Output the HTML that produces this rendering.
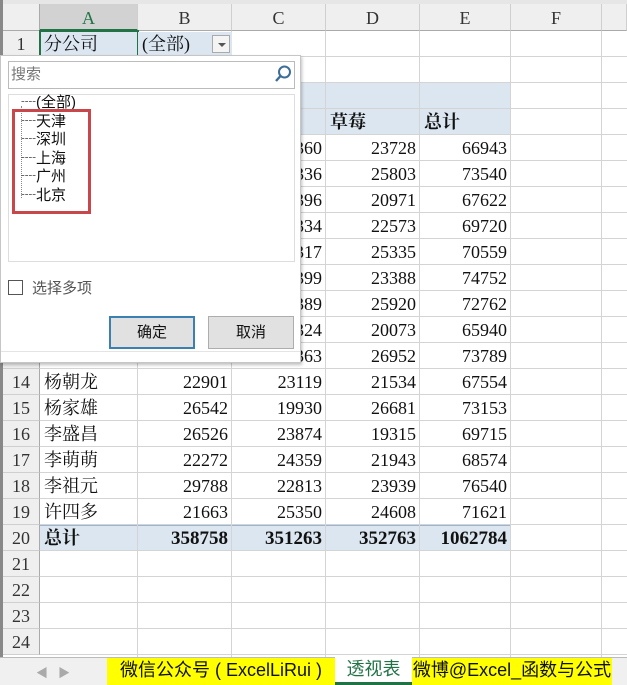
<!DOCTYPE html>
<html><head><meta charset="utf-8"><style>
*{margin:0;padding:0;box-sizing:border-box}
body{width:627px;height:685px;overflow:hidden;background:#fff;position:relative;font-family:"Liberation Serif","Noto Serif CJK SC",serif;font-size:18px;color:#111}
.a{position:absolute}
.hl{position:absolute;left:40px;width:587px;height:1px;background:#d4d4d4}
.vl{position:absolute;top:31px;height:626px;width:1px;background:#d4d4d4}
.ch{position:absolute;top:4px;height:27px;background:#efefef;border-right:1px solid #cfcfcf;border-bottom:1px solid #aaa;text-align:center;line-height:28px;font-size:18px;color:#333}
.rh{position:absolute;left:3px;width:37px;height:26px;background:#efefef;border-bottom:1px solid #cfcfcf;border-right:1px solid #aaa;text-align:center;line-height:27px;color:#333}
.c{position:absolute;height:26px;line-height:27px;white-space:nowrap}
.r{text-align:right;padding-right:4px}
.b{font-weight:bold}
.cjk{font-family:"Liberation Sans","Noto Sans CJK SC",sans-serif}
</style></head><body>
<div class="a" style="left:0;top:0;width:627px;height:4px;background:#e6e6e6"></div>
<div class="a" style="left:0;top:0;width:3px;height:657px;background:#888"></div>
<div class="a" style="left:3px;top:4px;width:37px;height:27px;background:#efefef;border-right:1px solid #aaa;border-bottom:1px solid #aaa"></div>
<div class="ch" style="left:40px;width:98px;background:#d2d2d2;color:#217346;border-bottom:2px solid #217346">A</div>
<div class="ch" style="left:138px;width:94px">B</div>
<div class="ch" style="left:232px;width:94px">C</div>
<div class="ch" style="left:326px;width:94px">D</div>
<div class="ch" style="left:420px;width:91px">E</div>
<div class="ch" style="left:511px;width:91px">F</div>
<div class="ch" style="left:602px;width:25px"></div>
<div class="a" style="left:40px;top:83px;width:471px;height:52px;background:#dce6f1"></div>
<div class="a" style="left:40px;top:525px;width:471px;height:26px;background:#dce6f1;border-top:1px solid #9bb4d2"></div>
<div id="grid"></div>
<script>
var T0=31,H=26;
var g='';
for(var i=1;i<=24;i++){var t=T0+(i-1)*H;
g+='<div class="rh" style="top:'+t+'px">'+i+'</div>';
g+='<div class="hl" style="top:'+(t+25)+'px"></div>';}
[138,232,326,420,511,602].forEach(function(x){g+='<div class="vl" style="left:'+(x-1)+'px"></div>'});
var rows=[[23360,23728,66943],[23336,25803,73540],[23396,20971,67622],[23334,22573,69720],[23317,25335,70559],[23399,23388,74752],[23389,25920,72762],[23324,20073,65940],[23363,26952,73789]];
rows.forEach(function(r,k){var t=T0+(4+k)*H;
g+='<div class="c r" style="left:232px;width:94px;top:'+t+'px">'+r[0]+'</div><div class="c r" style="left:326px;width:94px;top:'+t+'px">'+r[1]+'</div><div class="c r" style="left:420px;width:91px;top:'+t+'px">'+r[2]+'</div>';});
var d=[['杨朝龙',22901,23119,21534,67554],['杨家雄',26542,19930,26681,73153],['李盛昌',26526,23874,19315,69715],['李萌萌',22272,24359,21943,68574],['李祖元',29788,22813,23939,76540],['许四多',21663,25350,24608,71621]];
d.forEach(function(r,k){var t=T0+(13+k)*H;
g+='<div class="c" style="left:44px;top:'+t+'px">'+r[0]+'</div>';
[[138,94],[232,94],[326,94],[420,91]].forEach(function(c,j){g+='<div class="c r" style="left:'+c[0]+'px;width:'+c[1]+'px;top:'+t+'px">'+r[j+1]+'</div>'});});
var t=T0+19*H;
g+='<div class="c b" style="left:44px;top:'+t+'px">总计</div>';
[[138,94,358758],[232,94,351263],[326,94,352763],[420,91,1062784]].forEach(function(c){g+='<div class="c r b" style="left:'+c[0]+'px;width:'+c[1]+'px;top:'+t+'px;font-size:19px">'+c[2]+'</div>'});
document.getElementById('grid').innerHTML=g;
</script>
<div class="c b" style="left:330px;top:109px">草莓</div>
<div class="c b" style="left:424px;top:109px">总计</div>
<div class="a" style="left:39px;top:30px;width:100px;height:28px;border:2px solid #217346;background:#dce6f1"></div>
<div class="c" style="left:44px;top:31px">分公司</div>
<div class="a" style="left:138px;top:32px;width:94px;height:25px;background:#dce6f1"></div>
<div class="c" style="left:142px;top:31px">(全部)</div>
<div class="a" style="left:212px;top:35px;width:18px;height:18px;border:1px solid #aaa;background:#f4f4f4"><div style="position:absolute;left:5px;top:7px;border-left:4px solid transparent;border-right:4px solid transparent;border-top:4px solid #555"></div></div>
<div class="a cjk" style="left:0;top:55px;width:301px;height:308px;background:#fff;border:1px solid #c6c6c6;box-shadow:1px 2px 3px rgba(0,0,0,.25)">
 <div class="a" style="left:7px;top:5px;width:287px;height:28px;border:1px solid #bbb"></div>
 <div class="a" style="left:10px;top:7px;font-size:15px;color:#777;line-height:24px">搜索</div>
 <svg class="a" style="left:272px;top:8px" width="20" height="20" viewBox="0 0 20 20"><circle cx="11.5" cy="8" r="5.5" fill="none" stroke="#3d6d99" stroke-width="2"/><path d="M7.5 12 L3 17" stroke="#3d6d99" stroke-width="2.4"/></svg>
 <div class="a" style="left:7px;top:38px;width:287px;height:168px;border:1px solid #ddd"></div>
 <div class="a" style="left:20px;top:50px;width:1px;height:92px;border-left:1px dotted #888"></div>
 <div class="a" style="font-size:15px;line-height:18.5px;left:20px;top:38px">
  <div>┈(全部)</div><div>┈天津</div><div>┈深圳</div><div>┈上海</div><div>┈广州</div><div>┈北京</div>
 </div>
 <div class="a" style="left:11px;top:53px;width:79px;height:105px;border:3px solid #c9474a"></div>
 <div class="a" style="left:7px;top:224px;width:15px;height:15px;border:1px solid #555"></div>
 <div class="a" style="left:31px;top:221px;font-size:15px;color:#555">选择多项</div>
 <div class="a" style="left:108px;top:260px;width:86px;height:33px;border:2px solid #3c7fb1;background:#e1e1e1;text-align:center;line-height:29px;font-size:15px">确定</div>
 <div class="a" style="left:207px;top:260px;width:86px;height:33px;border:1px solid #adadad;background:#e1e1e1;text-align:center;line-height:31px;font-size:15px">取消</div>
 <div class="a" style="left:0;top:295px;width:299px;height:1px;background:#e4e4e4"></div>
</div>
<div class="a cjk" style="left:0;top:657px;width:627px;height:28px;background:#f0f0f0;border-top:1px solid #bbb">
 <div class="a" style="left:36px;top:6px;color:#aaa;font-size:12px">◀</div>
 <div class="a" style="left:58px;top:6px;color:#aaa;font-size:12px">▶</div>
 <div class="a" style="left:107px;top:0;width:228px;height:27px;background:#ffff00;text-align:center;line-height:24px;font-size:18px">微信公众号 ( ExcelLiRui )</div>
 <div class="a" style="left:335px;top:-1px;width:77px;height:28px;background:#fff;border-bottom:3px solid #217346;text-align:center;line-height:24px;font-size:18px;color:#217346">透视表</div>
 <div class="a" style="left:412px;top:0;width:200px;height:27px;background:#ffff00;text-align:center;line-height:24px;font-size:18px;white-space:nowrap">微博@Excel_函数与公式</div>
</div>
</body></html>
